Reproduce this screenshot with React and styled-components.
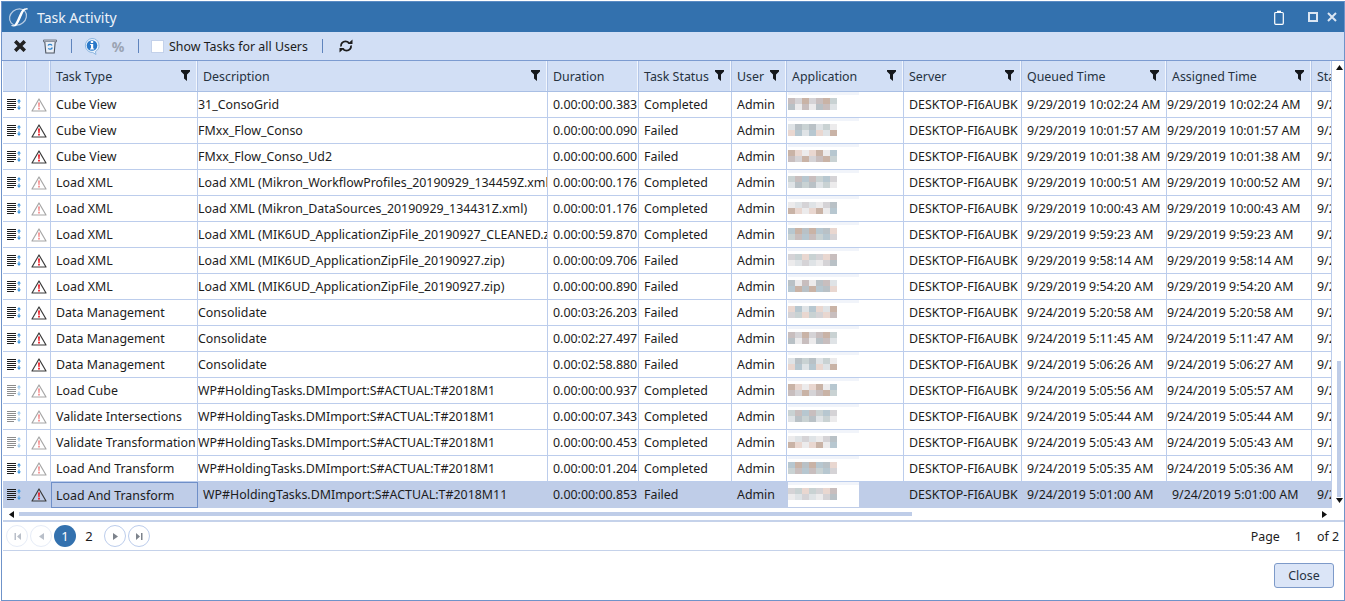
import styled, { createGlobalStyle } from 'styled-components';

const GlobalStyle = createGlobalStyle`
  html, body {
    margin: 0;
    padding: 0;
    background: #ffffff;
    overflow: hidden;
  }
  * {
    box-sizing: border-box;
  }
`;

const COLUMNS = '24px 24px 147px 350px 91px 93px 55px 117px 118px 145px 145px 20px';

const Window = styled.div`
  display: flex;
  flex-direction: column;
  width: 1344px;
  height: 600px;
  margin: 1px 0 0 1px;
  border: 1px solid #6f93c9;
  border-top-color: #5b8bc4;
  background: #ffffff;
  font-family: 'Noto Sans', 'Open Sans', sans-serif;
  font-size: 12.4px;
  color: #1c1c1c;
`;

const TitleBar = styled.div`
  display: flex;
  align-items: center;
  height: 30px;
  flex: none;
  padding: 0 7px 0 6px;
  background: #3371ae;
  color: #ffffff;
`;

const Title = styled.span`
  margin-left: 7px;
  font-size: 14px;
  color: #eef3fa;
  flex: 1;
`;

const WindowButton = styled.span`
  display: flex;
  margin-left: ${({ $gap }) => $gap || 0}px;
`;

const Toolbar = styled.div`
  display: flex;
  align-items: center;
  height: 29px;
  flex: none;
  padding-left: 10px;
  background: #d2dff5;
  border-bottom: 1px solid #7c9bd0;
`;

const ToolButton = styled.span`
  display: flex;
  align-items: center;
  justify-content: center;
  width: ${({ $w }) => $w || 16}px;
  margin-right: ${({ $mr }) => $mr || 0}px;
`;

const Percent = styled.span`
  font-size: 14px;
  font-weight: 700;
  color: #9aa3b2;
`;

const Divider = styled.span`
  width: 1px;
  height: 14px;
  background: #5f84bd;
  margin-right: ${({ $mr }) => $mr || 0}px;
`;

const Check = styled.span`
  width: 13px;
  height: 13px;
  background: #ffffff;
  border: 1px solid #c3d1ea;
  margin-right: 5px;
`;

const CheckLabel = styled.span`
  width: 139px;
  margin-right: 14px;
  white-space: nowrap;
`;

const GridArea = styled.div`
  display: flex;
  flex: none;
  height: 459px;
  padding-left: 1px;
`;

const GridMain = styled.div`
  width: 1329px;
  flex: none;
  display: flex;
  flex-direction: column;
  overflow: hidden;
`;

const HeaderRow = styled.div`
  display: grid;
  grid-template-columns: ${COLUMNS};
  height: 31px;
  flex: none;
  border-bottom: 1px solid #a9bfe4;
`;

const HeaderCell = styled.div`
  position: relative;
  display: flex;
  align-items: center;
  padding-left: 5px;
  background: #d2dff5;
  border-right: 1px solid #b3c6e8;
  box-shadow: inset -1px 0 0 #f2f6fd;
  color: #26323f;
  white-space: nowrap;
  overflow: hidden;
`;

const FilterMark = styled.span`
  position: absolute;
  top: 9px;
  right: 7px;
  display: flex;
`;

const DataRow = styled.div`
  display: grid;
  grid-template-columns: ${COLUMNS};
  height: 26px;
  flex: none;
  background: ${({ $selected }) => ($selected ? '#bfcde8' : '#ffffff')};
`;

const Cell = styled.div`
  display: flex;
  align-items: center;
  padding-left: ${({ $pad }) => $pad ?? 5}px;
  border-right: 1px solid ${({ $selected }) => ($selected ? 'transparent' : '#bccdec')};
  border-bottom: 1px solid ${({ $selected }) => ($selected ? 'transparent' : '#bccdec')};
  white-space: nowrap;
  overflow: hidden;
`;

const FocusCell = styled(Cell)`
  border: 1px solid #6f8fc8;
  padding-left: 4px;
`;

const IconCell = styled(Cell)`
  justify-content: center;
  padding-left: 0;
`;

const MosaicStrip = styled.div`
  position: relative;
  width: 71px;
  height: 25px;
  margin-left: -3px;
  background: #ffffff;
  border-top: 3px solid #f1f4fa;
`;

const MosaicRow = styled.div`
  display: flex;
  margin-top: ${({ $top }) => $top || 0}px;
`;

const MosaicTile = styled.span`
  width: 7px;
  height: 6px;
`;

const HorizontalBar = styled.div`
  display: flex;
  align-items: center;
  height: 12px;
  flex: none;
  padding-left: 5px;
`;

const HorizontalThumb = styled.div`
  width: 893px;
  height: 4px;
  margin-left: 4px;
  background: #bfcde8;
`;

const ArrowSpacer = styled.div`
  flex: 1;
`;

const VerticalBar = styled.div`
  position: relative;
  flex: 1;
`;

const VerticalThumb = styled.div`
  position: absolute;
  top: 300px;
  left: 5px;
  width: 4px;
  height: 136px;
  background: #bfcde8;
`;

const ScrollArrow = styled.span`
  position: absolute;
  left: 4px;
  top: ${({ $top }) => $top}px;
  display: flex;
`;

const Pager = styled.div`
  display: flex;
  align-items: center;
  height: 31px;
  flex: none;
  margin-left: 1px;
  padding: 0 4px 0 3px;
  border-top: 2px solid #c5d2ea;
  border-bottom: 1px solid #c5d2ea;
`;

const PageNav = styled.span`
  display: flex;
  align-items: center;
  justify-content: center;
  width: 22px;
  height: 22px;
  margin-right: 2px;
  border-radius: 50%;
  border: 1px solid ${({ $active }) => ($active ? '#bccdec' : '#e6ecf7')};
`;

const PageNumber = styled.span`
  display: flex;
  align-items: center;
  justify-content: center;
  width: 22px;
  height: 22px;
  margin-right: ${({ $mr }) => $mr || 2}px;
  border-radius: 50%;
  font-size: 13px;
  background: ${({ $current }) => ($current ? '#3371ae' : 'transparent')};
  color: ${({ $current }) => ($current ? '#ffffff' : '#1c1c1c')};
`;

const PageInfo = styled.span`
  margin-left: auto;
  display: flex;
  gap: 15px;
  padding-right: 1px;
`;

const Footer = styled.div`
  flex: 1;
  display: flex;
  align-items: center;
  justify-content: flex-end;
  padding: 0 10px 1px 0;
`;

const CloseButton = styled.button`
  width: 60px;
  height: 25px;
  padding: 0;
  background: #dbe5f7;
  border: 1px solid #7d9ac9;
  border-radius: 3px;
  font: inherit;
  color: #26323f;
`;

const Logo = () => (
  <svg width="22" height="20" viewBox="0 0 22 20" fill="none">
    <ellipse cx="10" cy="10" rx="9" ry="7.6" transform="rotate(-40 10 10)" stroke="#b9cde4" strokeWidth="1.2" />
    <path d="M7 18C10 14 12 7 14 4c1-1.6 4-2.6 5.5-2-2-.3-3.6 1-4.6 2.6C13 8 11.500 14 8.500 17.500 7.500 18.700 5 19 3.500 18.500" stroke="#ffffff" strokeWidth="1.3" />
  </svg>
);

const ClipboardIcon = () => (
  <svg width="10" height="15" viewBox="0 0 10 15" fill="none" stroke="#ffffff" strokeWidth="1.200">
    <rect x="0.700" y="2.500" width="8.600" height="11.800" rx="1" />
    <rect x="3" y="0.700" width="4" height="1.800" fill="#ffffff" stroke="none" />
  </svg>
);

const MaximizeIcon = () => (
  <svg width="10" height="10" viewBox="0 0 10 10" fill="none" stroke="#dbe6f3" strokeWidth="2">
    <rect x="1" y="1" width="8" height="8" />
  </svg>
);

const CloseIcon = ({ size = 10, color = '#dbe6f3', width = 2 }) => (
  <svg width={size} height={size} viewBox="0 0 10 10" fill="none" stroke={color} strokeWidth={width}>
    <path d="M1 1l8 8M9 1l-8 8" />
  </svg>
);

const TrashIcon = () => (
  <svg width="14" height="15" viewBox="0 0 14 15" fill="none">
    <path d="M0.500 1h13v1.800h-13z" fill="#cfd6e2" stroke="#59606c" strokeWidth="0.800" />
    <path d="M1.800 3l1 11h8.400l1-11" fill="#e9eef6" stroke="#4f5763" strokeWidth="1.100" />
    <path d="M5 6.500a2.300 2.300 0 0 1 4 0M9.300 8.500a2.300 2.300 0 0 1-4 .8" stroke="#2e86d0" strokeWidth="1.300" />
  </svg>
);

const InfoIcon = () => (
  <svg width="16" height="17" viewBox="0 0 16 17">
    <path d="M8 .5a7 7 0 0 1 3.400 13.100L12 16.500l-3.200-2A7 7 0 1 1 8 .5z" fill="#eaf3fc" stroke="#8db6e0" strokeWidth="1" />
    <circle cx="8" cy="7.500" r="5.300" fill="#2a79c9" />
    <rect x="6.800" y="3" width="2.400" height="2" fill="#ffffff" />
    <path d="M6.200 6h3v4.500h1v1H6v-1h1V7H6.200z" fill="#ffffff" />
  </svg>
);

const RefreshIcon = () => (
  <svg width="14" height="14" viewBox="0 0 14 14" fill="none" stroke="#1c1c1c" strokeWidth="1.800">
    <path d="M2 7.500C1.500 4.500 3.800 2.300 6.500 2.300c1.500 0 2.500.5 3.500 1.500" />
    <path d="M12 6.500c.5 3-1.800 5.200-4.500 5.200-1.500 0-2.500-.5-3.500-1.500" />
    <path d="M8.500 5h5V.5zM5.500 9h-5v4.500z" fill="#1c1c1c" stroke="none" />
  </svg>
);

const FilterIcon = () => (
  <svg width="9" height="11" viewBox="0 0 9 11">
    <path d="M0 0h9v1.500L6 4.500V11L3 8.500V4.500L0 1.500z" fill="#15181c" />
  </svg>
);

const ListIcon = ({ faded }) => (
  <svg width="15" height="11" viewBox="0 0 15 11" style={{ opacity: faded ? 0.5 : 1 }}>
    <path d="M0 .5h9M0 2.500h9M0 4.500h9M0 6.500h9M0 8.500h9M0 10.500h7" stroke="#1c1c1c" strokeWidth="1" />
    <path d="M12 0l2 2.500h-1.400v2h-1.200v-2H10zM12 11l2-2.500h-1.400v-2h-1.200v2H10z" fill="#3d95dc" />
  </svg>
);

const WarningIcon = ({ failed }) => (
  <svg width="16" height="14" viewBox="0 0 16 14">
    <path
      d="M8 1L15 13H1z"
      fill="none"
      stroke={failed ? '#3a3a3a' : '#a6a6a6'}
      strokeWidth="1.200"
      strokeLinejoin="round"
    />
    <path d="M7 4.500h2l-.4 4.500H7.400z" fill={failed ? '#ee1c25' : '#f58f8f'} />
    <rect x="7.100" y="9.700" width="1.800" height="1.800" fill={failed ? '#ee1c25' : '#f58f8f'} />
  </svg>
);

const Triangle = ({ dir = 'up', color = '#111111', size = 7 }) => {
  const points = {
    up: '0,6 3.500,1 7,6',
    down: '0,1 3.500,6 7,1',
    left: '6,0 1,3.500 6,7',
    right: '1,0 6,3.500 1,7',
  };
  return (
    <svg width={size} height={size} viewBox="0 0 7 7">
      <polygon points={points[dir]} fill={color} />
    </svg>
  );
};

const EdgeIcon = ({ right, color }) => (
  <svg width="7" height="7" viewBox="0 0 7 7" fill={color}>
    {right ? <path d="M0 0l4 3.500L0 7zM5 0h1.500v7H5z" /> : <path d="M7 0L3 3.500 7 7zM.5 0H2v7H.5z" />}
  </svg>
);

const MOSAIC_COLORS = ['#e9d7d0', '#c9d2d3', '#b9c1c6', '#c9b3a6', '#d5d3d6', '#dfe3e6', '#b7c7d0', '#c8bebe', '#ecebec'];

// blurred application name, same tiles for the same seed
const Mosaic = ({ seed }) => {
  const tile = (row, i) => {
    const hash = (seed * 7 + row * 13 + i * 5 + i * i) % MOSAIC_COLORS.length;
    return <MosaicTile key={i} style={{ background: MOSAIC_COLORS[hash] }} />;
  };
  return (
    <MosaicStrip>
      <MosaicRow $top={3}>{[0, 1, 2, 3, 4, 5, 6].map((i) => tile(0, i))}</MosaicRow>
      <MosaicRow>{[0, 1, 2, 3, 4, 5, 6].map((i) => tile(1, i))}</MosaicRow>
    </MosaicStrip>
  );
};

const HEADERS = [
  ['', false],
  ['', false],
  ['Task Type', true],
  ['Description', true],
  ['Duration', false],
  ['Task Status', true],
  ['User', true],
  ['Application', true],
  ['Server', true],
  ['Queued Time', true],
  ['Assigned Time', true],
  ['Start Time', false],
];

const ROWS = [
  ['Cube View', '31_ConsoGrid', '0.00:00:00.383', 'Completed', '9/29/2019 10:02:24 AM', '9/29/2019 10:02:24 AM'],
  ['Cube View', 'FMxx_Flow_Conso', '0.00:00:00.090', 'Failed', '9/29/2019 10:01:57 AM', '9/29/2019 10:01:57 AM'],
  ['Cube View', 'FMxx_Flow_Conso_Ud2', '0.00:00:00.600', 'Failed', '9/29/2019 10:01:38 AM', '9/29/2019 10:01:38 AM'],
  ['Load XML', 'Load XML (Mikron_WorkflowProfiles_20190929_134459Z.xml)', '0.00:00:00.176', 'Completed', '9/29/2019 10:00:51 AM', '9/29/2019 10:00:52 AM'],
  ['Load XML', 'Load XML (Mikron_DataSources_20190929_134431Z.xml)', '0.00:00:01.176', 'Completed', '9/29/2019 10:00:43 AM', '9/29/2019 10:00:43 AM'],
  ['Load XML', 'Load XML (MIK6UD_ApplicationZipFile_20190927_CLEANED.zip)', '0.00:00:59.870', 'Completed', '9/29/2019 9:59:23 AM', '9/29/2019 9:59:23 AM'],
  ['Load XML', 'Load XML (MIK6UD_ApplicationZipFile_20190927.zip)', '0.00:00:09.706', 'Failed', '9/29/2019 9:58:14 AM', '9/29/2019 9:58:14 AM'],
  ['Load XML', 'Load XML (MIK6UD_ApplicationZipFile_20190927.zip)', '0.00:00:00.890', 'Failed', '9/29/2019 9:54:20 AM', '9/29/2019 9:54:20 AM'],
  ['Data Management', 'Consolidate', '0.00:03:26.203', 'Failed', '9/24/2019 5:20:58 AM', '9/24/2019 5:20:58 AM'],
  ['Data Management', 'Consolidate', '0.00:02:27.497', 'Failed', '9/24/2019 5:11:45 AM', '9/24/2019 5:11:47 AM'],
  ['Data Management', 'Consolidate', '0.00:02:58.880', 'Failed', '9/24/2019 5:06:26 AM', '9/24/2019 5:06:27 AM'],
  ['Load Cube', 'WP#HoldingTasks.DMImport:S#ACTUAL:T#2018M1', '0.00:00:00.937', 'Completed', '9/24/2019 5:05:56 AM', '9/24/2019 5:05:57 AM', true],
  ['Validate Intersections', 'WP#HoldingTasks.DMImport:S#ACTUAL:T#2018M1', '0.00:00:07.343', 'Completed', '9/24/2019 5:05:44 AM', '9/24/2019 5:05:44 AM', true],
  ['Validate Transformation', 'WP#HoldingTasks.DMImport:S#ACTUAL:T#2018M1', '0.00:00:00.453', 'Completed', '9/24/2019 5:05:43 AM', '9/24/2019 5:05:43 AM', true],
  ['Load And Transform', 'WP#HoldingTasks.DMImport:S#ACTUAL:T#2018M1', '0.00:00:01.204', 'Completed', '9/24/2019 5:05:35 AM', '9/24/2019 5:05:36 AM'],
];

const SELECTED = ['Load And Transform', 'WP#HoldingTasks.DMImport:S#ACTUAL:T#2018M11', '0.00:00:00.853', 'Failed', '9/24/2019 5:01:00 AM', '9/24/2019 5:01:00 AM'];

const TaskRow = ({ row, index, selected }) => {
  const [type, description, duration, status, queued, assigned, faded] = row;
  const failed = status === 'Failed';
  const TypeCell = selected ? FocusCell : Cell;
  return (
    <DataRow $selected={selected}>
      <IconCell $selected={selected}><ListIcon faded={faded} /></IconCell>
      <IconCell $selected={selected}><WarningIcon failed={failed} /></IconCell>
      <TypeCell $selected={selected}>{type}</TypeCell>
      <Cell $selected={selected} $pad={selected ? 5 : 0}>{description}</Cell>
      <Cell $selected={selected}>{duration}</Cell>
      <Cell $selected={selected}>{status}</Cell>
      <Cell $selected={selected}>Admin</Cell>
      <Cell $selected={selected} $pad={4}><Mosaic seed={index + 1} /></Cell>
      <Cell $selected={selected}>DESKTOP-FI6AUBK</Cell>
      <Cell $selected={selected}>{queued}</Cell>
      <Cell $selected={selected} $pad={selected ? 5 : 0}>{assigned}</Cell>
      <Cell $selected={selected}>{queued.slice(0, 5)}</Cell>
    </DataRow>
  );
};

export default function App() {
  return (
    <>
      <GlobalStyle />
      <Window>
        <TitleBar>
          <Logo />
          <Title>Task Activity</Title>
          <WindowButton><ClipboardIcon /></WindowButton>
          <WindowButton $gap={24}><MaximizeIcon /></WindowButton>
          <WindowButton $gap={9}><CloseIcon /></WindowButton>
        </TitleBar>
        <Toolbar>
          <ToolButton $mr={14}><CloseIcon size={12} color="#222222" width={3} /></ToolButton>
          <ToolButton $mr={13}><TrashIcon /></ToolButton>
          <Divider $mr={12} />
          <ToolButton $mr={10}><InfoIcon /></ToolButton>
          <ToolButton $mr={12}><Percent>%</Percent></ToolButton>
          <Divider $mr={12} />
          <Check />
          <CheckLabel>Show Tasks for all Users</CheckLabel>
          <Divider $mr={15} />
          <ToolButton><RefreshIcon /></ToolButton>
        </Toolbar>
        <GridArea>
          <GridMain>
            <HeaderRow>
              {HEADERS.map(([label, hasFilter], i) => (
                <HeaderCell key={i}>
                  {label}
                  {hasFilter && <FilterMark><FilterIcon /></FilterMark>}
                </HeaderCell>
              ))}
            </HeaderRow>
            {ROWS.map((row, i) => (
              <TaskRow key={i} row={row} index={i} />
            ))}
            <TaskRow row={SELECTED} index={15} selected />
            <HorizontalBar>
              <Triangle dir="left" />
              <HorizontalThumb />
              <ArrowSpacer />
              <Triangle dir="right" />
              <ArrowSpacer as="span" style={{ flex: 'none', width: 4 }} />
            </HorizontalBar>
          </GridMain>
          <VerticalBar>
            <ScrollArrow $top={3}><Triangle dir="up" /></ScrollArrow>
            <VerticalThumb />
            <ScrollArrow $top={436}><Triangle dir="down" /></ScrollArrow>
          </VerticalBar>
        </GridArea>
        <Pager>
          <PageNav><EdgeIcon color="#b9bfc9" /></PageNav>
          <PageNav><Triangle dir="left" color="#b9bfc9" /></PageNav>
          <PageNumber $current>1</PageNumber>
          <PageNumber $mr={4}>2</PageNumber>
          <PageNav $active><Triangle dir="right" color="#7d838c" /></PageNav>
          <PageNav $active><EdgeIcon right color="#7d838c" /></PageNav>
          <PageInfo>
            <span>Page</span>
            <span>1</span>
            <span>of 2</span>
          </PageInfo>
        </Pager>
        <Footer>
          <CloseButton>Close</CloseButton>
        </Footer>
      </Window>
    </>
  );
}
